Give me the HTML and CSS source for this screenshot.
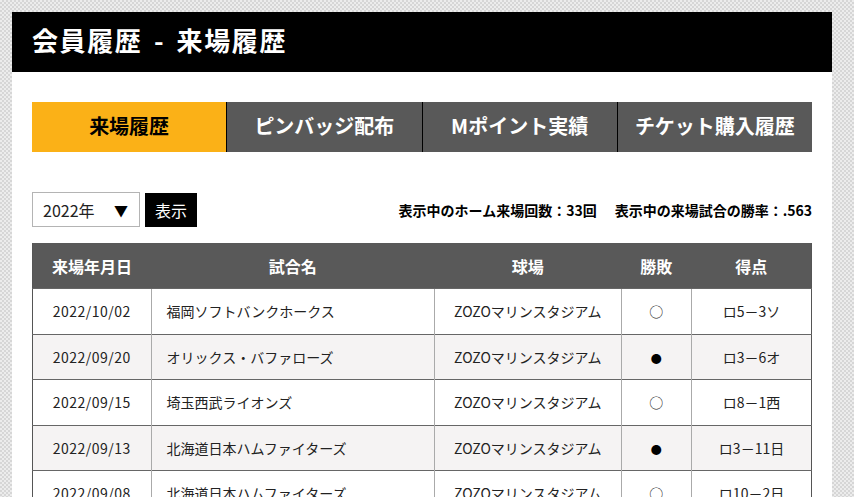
FILE: index.html
```html
<!DOCTYPE html>
<html lang="ja">
  <head>
    <meta charset="UTF-8" />
    <title>会員履歴 - 来場履歴</title>
    <link rel="stylesheet" href="styles.css">
  </head>
  <body>
    <div class="page">
      <h1 class="page-title">会員履歴 - 来場履歴</h1>

      <div class="content">
        <!-- タブ -->
        <ul class="tabs">
          <li class="tab active">来場履歴</li>
          <li class="tab">ピンバッジ配布</li>
          <li class="tab">Mポイント実績</li>
          <li class="tab">チケット購入履歴</li>
        </ul>

        <!-- 絞り込み -->
        <div class="toolbar">
          <div class="filter">
            <div class="year-select">
              <span>2022年</span>
              <span class="arrow">▼</span>
            </div>
            <button class="show-btn">表示</button>
          </div>
          <p class="summary">
            表示中のホーム来場回数：33回<span class="gap"></span>表示中の来場試合の勝率：.563
          </p>
        </div>

        <!-- 一覧 -->
        <table class="history">
          <thead>
            <tr>
              <th class="col-date">来場年月日</th>
              <th class="col-game">試合名</th>
              <th class="col-stadium">球場</th>
              <th class="col-result">勝敗</th>
              <th class="col-score">得点</th>
            </tr>
          </thead>
          <tbody>
            <tr>
              <td class="col-date">2022/10/02</td>
              <td class="col-game">福岡ソフトバンクホークス</td>
              <td class="col-stadium">ZOZOマリンスタジアム</td>
              <td class="col-result">○</td>
              <td class="col-score">ロ5－3ソ</td>
            </tr>
            <tr>
              <td class="col-date">2022/09/20</td>
              <td class="col-game">オリックス・バファローズ</td>
              <td class="col-stadium">ZOZOマリンスタジアム</td>
              <td class="col-result"><span class="lose">●</span></td>
              <td class="col-score">ロ3－6オ</td>
            </tr>
            <tr>
              <td class="col-date">2022/09/15</td>
              <td class="col-game">埼玉西武ライオンズ</td>
              <td class="col-stadium">ZOZOマリンスタジアム</td>
              <td class="col-result">○</td>
              <td class="col-score">ロ8－1西</td>
            </tr>
            <tr>
              <td class="col-date">2022/09/13</td>
              <td class="col-game">北海道日本ハムファイターズ</td>
              <td class="col-stadium">ZOZOマリンスタジアム</td>
              <td class="col-result"><span class="lose">●</span></td>
              <td class="col-score">ロ3－11日</td>
            </tr>
            <tr>
              <td class="col-date">2022/09/08</td>
              <td class="col-game">北海道日本ハムファイターズ</td>
              <td class="col-stadium">ZOZOマリンスタジアム</td>
              <td class="col-result">○</td>
              <td class="col-score">ロ10－2日</td>
            </tr>
          </tbody>
        </table>
      </div>
    </div>
  </body>
</html>
```

FILE: styles.css
```css
body {
  margin: 0;
  font-family: "Noto Sans CJK JP", "Noto Sans", sans-serif;
  color: #111;
  background-color: #e4e4e4;
  background-image: repeating-conic-gradient(#d6d6d6 0 25%, #ececec 0 50%);
  background-size: 4px 4px;
}

.page {
  width: 820px;
  margin: 12px;
  background: #fff;
}

.page-title {
  margin: 0;
  height: 60px;
  padding-left: 20px;
  background: #000;
  color: #fff;
  font-size: 26px;
  font-weight: bold;
  letter-spacing: 1.6px;
  word-spacing: 4px;
  line-height: 56px;
}

.content {
  padding: 30px 20px 40px;
}

.tabs {
  display: flex;
  margin: 0;
  padding: 0;
  list-style: none;
}

.tab {
  flex: 1;
  height: 50px;
  line-height: 48px;
  text-align: center;
  background: #595959;
  color: #fff;
  font-size: 20px;
  font-weight: bold;
  border-left: 1px solid #000;
}

.tab:first-child {
  border-left: none;
}

.tab.active {
  background: #fbb117;
  color: #000;
}

.toolbar {
  display: flex;
  justify-content: space-between;
  align-items: center;
  margin-top: 40px;
}

.filter {
  display: flex;
  align-items: center;
  gap: 5px;
}

.year-select {
  display: flex;
  align-items: center;
  justify-content: space-between;
  box-sizing: border-box;
  width: 108px;
  height: 35px;
  padding: 0 11px 0 10px;
  border: 1px solid #b4b4b4;
  font-size: 16px;
  color: #222;
}

.arrow {
  font-size: 14px;
  color: #000;
}

.show-btn {
  height: 34px;
  padding: 0 10px;
  background: #000;
  color: #fff;
  border: none;
  font-family: inherit;
  font-size: 16px;
  line-height: 1;
}

.summary {
  margin: 0;
  font-size: 14px;
  font-weight: bold;
  color: #000;
}

.summary .gap {
  display: inline-block;
  width: 18px;
}

.history {
  width: 100%;
  margin-top: 16px;
  border-collapse: collapse;
  font-size: 14px;
  border-left: 1px solid #555;
  border-right: 1px solid #555;
}

.history th {
  height: 45px;
  background: #595959;
  color: #fff;
  font-size: 16px;
  font-weight: bold;
  text-align: center;
  padding: 0;
}

.history td {
  height: 44.5px;
  padding: 0;
  text-align: center;
  border-top: 1px solid #666;
  border-left: 1px solid #aaa;
  color: #222;
}

.history td:first-child {
  border-left: none;
}

.history tbody tr:nth-child(even) {
  background: #f5f3f3;
}

.history td.col-date {
  letter-spacing: 0.5px;
}

.col-date {
  width: 118px;
}

.col-game {
  width: 285px;
}

.history td.col-game {
  width: 270px;
  text-align: left;
  padding-left: 15px;
}

.col-stadium {
  width: 187px;
}

.col-result {
  width: 70px;
}

.lose {
  font-size: 11px;
  color: #000;
}

.col-score {
  width: 120px;
}
```
